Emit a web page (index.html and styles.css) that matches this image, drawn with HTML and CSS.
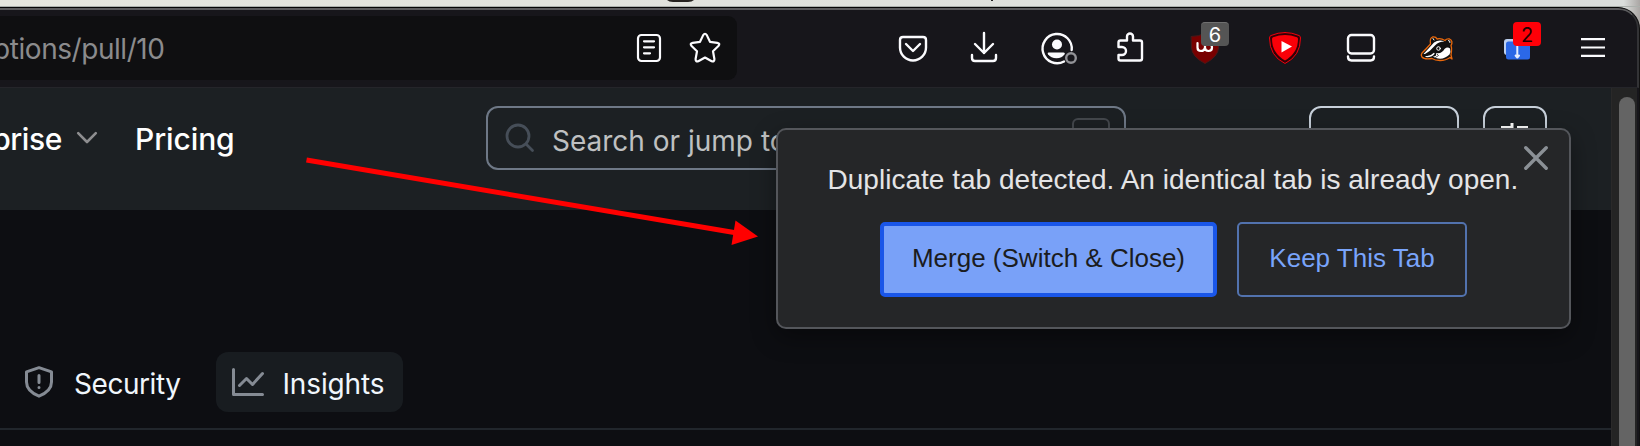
FILE: index.html
```html
<!DOCTYPE html>
<html lang="en">
<head>
<meta charset="utf-8">
<title>Duplicate tab</title>
<link rel="stylesheet" href="styles.css">
</head>
<body>
<div class="backdrop">
  <svg class="backdrop-marks" width="1640" height="6"><path d="M667 0h27q-2 2-6 2h-15q-4 0-6-2z" fill="#25221f"/><path d="M991 0h2v1h-2z" fill="#222"/></svg>
</div>
<div class="window">
  <div class="toolbar">
    <div class="urlbar">
      <div class="url"><span>options/pull/10</span></div>
      <svg class="reader" width="36" height="36" viewBox="0 0 36 36"><rect x="7" y="5" width="22" height="26" rx="3.5"/><path d="M13 11.3h10M13 17.3h10M13 23.3h6"/></svg>
      <svg class="star" width="36" height="36" viewBox="0 0 36 36"><path d="M16.2 5.1Q18 2.4 19.8 5.1L23 11.8L30.3 12.8Q33.6 13.4 31.4 16L26 21.2L27.4 29Q27.5 32 24.700 31.200L18 27.500L11.300 31.200Q8.500 32 8.600 29L10 21.200L4.600 16Q2.400 13.400 5.700 12.800L13 11.800Z"/></svg>
    </div>
    <div class="actions">
      <svg width="40" height="40" viewBox="0 0 40 40"><path d="M10 9h20q3 0 3 3v7.500a13 13 0 0 1-26 0V12q0-3 3-3z"/><path d="M13 16l7 7 7-7"/></svg>
      <svg width="40" height="40" viewBox="0 0 40 40"><path d="M20 5v20M11 16l9 9 9-9M8 27v3q0 3 3 3h18q3 0 3-3v-3"/></svg>
      <svg width="40" height="40" viewBox="0 0 40 40"><path d="M25 33.500A14.600 14.600 0 1 1 32.700 22"/><circle class="solid" cx="18" cy="16.500" r="5"/><path class="solid" d="M9.500 24.500h15q2 0 1 1.800-2.500 4-8 4t-8.500-4q-1-1.800.5-1.800z"/><circle class="account-dot" cx="32" cy="30" r="4.800"/></svg>
      <svg width="40" height="40" viewBox="0 0 40 40"><path d="M8.500 19v-4.500q0-2 2-2h6.500v-4a3 3 0 0 1 6 0v4h7q2 0 2 2v16q0 2-2 2h-19.500q-2 0-2-2V27h3.500a4 4 0 0 0 0-8z"/></svg>
      <div class="ext">
        <svg width="40" height="40" viewBox="0 0 40 40"><path d="M6.500 8.500q8 0 13.500-3.500 5.500 3.500 13.500 3.500v11q0 9-13.500 16Q6.500 28.500 6.500 19.500z" fill="#780000" stroke="#4c1717" stroke-width="1"/><path d="M12.500 15v4.500q0 3.500 3.500 3.500t4-3.500V17v2.500q0 3.500 3.500 3.500t3.500-3.500-3-3.500" stroke="#fff" stroke-width="2.200"/></svg>
        <span class="badge badge-grey">6</span>
      </div>
      <svg width="40" height="40" viewBox="0 0 40 40"><path d="M20 4.500q7 0 14 3 1.500.5 1.500 2.500 0 18-15.500 25.500Q4.500 28 4.500 10q0-2 1.500-2.500 7-3 14-3z" fill="#330006" stroke="#f1000d" stroke-width="1"/><path d="M20 7q6 0 12 2.300 1 .5 1 1.700 0 14-13 21.500Q7 25 7 11q0-1.200 1-1.700Q14 7 20 7z" fill="#fa0008" stroke="none"/><path d="M16.500 13l10.500 5.500-10.500 6z" fill="#fff" stroke="none"/></svg>
      <svg width="40" height="40" viewBox="0 0 40 40"><rect x="7" y="7" width="26" height="18.500" rx="3.500"/><path d="M7 28.500q0 4 3.500 4h19q3.500 0 3.500-4"/></svg>
      <svg width="40" height="40" viewBox="0 0 40 40"><path d="M5 25q5-5 8.500-9-1-6 2-7 3.500-.5 4.500 2 4-1 8 1.500 1.500-2 4.500-1.500 4 2 1.500 6.500 1 3 .5 5.500l-.500 4 1 4-2-1.500q-4 3-10 3-5 0-8-2-8 1-10-1.500-1.500-2 0-4z" fill="#111" stroke="#ea680c" stroke-width="1.300"/><path d="M6.500 26Q12 20 17 14.500q5-3.500 10.500-1-6 0-9.500 4-5 6-10 8.500z" fill="#fff" stroke="none"/><path d="M19 25q6 1 8.500-4 3-2.500 5.500-.5 1 3-.5 6-5 5-11.500 4-3-.5-5-2 4 0 3-3.500z" fill="#fff" stroke="none"/><path d="M9 28.500q5 .5 8-3" stroke="#fff" stroke-width="1.200"/><circle cx="21.500" cy="20.500" r="1.800" fill="#111" stroke="#fff" stroke-width="1"/><path d="M16 10.500l1 1.500M31.500 12.500q2 0 1.500 2" stroke="#fff" stroke-width="1"/><path d="M20 26l1.500 1.500-3 2" stroke="#555" stroke-width="1"/></svg>
      <div class="ext">
        <svg width="40" height="40" viewBox="0 0 40 40"><rect x="7" y="11" width="22" height="16" rx="3" fill="#bdd0f0" stroke="none"/><rect x="9" y="13.500" width="24" height="18" rx="2.500" fill="#2b68e7" stroke="none"/><path d="M20.300 18v10M18.600 27.500l1.700 2 1.700-2" stroke="#e6edff" stroke-width="2"/></svg>
        <span class="badge badge-red">2</span>
      </div>
      <svg width="40" height="40" viewBox="0 0 40 40"><path class="menu" d="M8 11.200h24M8 19.500h24M8 27.800h24"/></svg>
    </div>
  </div>

  <div class="viewport">
    <div class="page">
      <header class="site-header">
        <nav class="nav">
          <div class="nav-cut"><span>Enterprise</span></div>
          <svg class="chevron" width="22" height="14" viewBox="0 0 22 14"><path d="M2.200 2.200l8.800 8.800 8.800-8.800"/></svg>
          <span class="pricing">Pricing</span>
        </nav>
        <div class="search">
          <svg width="30" height="30" viewBox="0 0 30 30"><circle cx="13" cy="13" r="11"/><path d="M21 21l6.500 6.500"/></svg>
          <span class="placeholder">Search or jump to...</span>
          <span class="key"></span>
        </div>
        <div class="sign-up"></div>
        <div class="settings"><svg width="28" height="28" viewBox="0 0 28 28"><path d="M0 5.500h12M11 1v8M16 5.500h11"/></svg></div>
      </header>
      <div class="tabs">
        <div class="tab">
          <svg class="shield" width="28" height="32" viewBox="0 0 28 32"><path d="M14 1.700l12.500 4.200V16q0 9-12.500 14.200Q1.500 25 1.500 16V5.900z"/><path d="M14 9.500v7M14 21.400v.2"/></svg>
          <span class="security">Security</span>
        </div>
        <div class="tab tab-active">
          <svg class="chart" width="32" height="28" viewBox="0 0 32 28"><path d="M1.500 1.500v25h29M7.500 17.500l7-7 6 6L30.500 5.500"/></svg>
          <span class="insights">Insights</span>
        </div>
      </div>
    </div>
    <div class="scrollbar"><div class="thumb"></div></div>
  </div>
</div>

<div class="dialog">
  <p class="message">Duplicate tab detected. An identical tab is already open.</p>
  <div class="buttons">
    <button class="btn merge"><span>Merge (Switch &amp; Close)</span></button>
    <button class="btn keep"><span>Keep This Tab</span></button>
  </div>
  <svg class="close" width="24" height="24" viewBox="0 0 24 24"><path d="M1.800 1.800l20.400 20.400M22.200 1.800L1.800 22.200"/></svg>
</div>

<svg class="arrow" width="460" height="100" viewBox="0 0 460 100"><path d="M6.500 10L440 83.500" stroke="#f00" stroke-width="5" stroke-linecap="butt"/><path d="M435.500 70.500L458 86.500L431.500 95z" fill="#f00"/></svg>
</body>
</html>
```
FILE: styles.css
```css
* { box-sizing: border-box; }
body {
  margin: 0;
  width: 1640px;
  height: 446px;
  overflow: hidden;
  position: relative;
  background: linear-gradient(90deg, #e5e6de, #dadddb 99%, #aaa6a4);
  font-family: Inter, "Liberation Sans", sans-serif;
  white-space: nowrap;
}
svg { display: block; flex: none; fill: none; stroke-linecap: round; stroke-linejoin: round; }
.backdrop { height: 7px; overflow: hidden; border-bottom: 1px solid #abb0ac; }
.window {
  height: 445px;
  display: flex;
  flex-direction: column;
  border-top: 1px solid #050505;
  border-right: 1px solid #111;
  border-radius: 0 22px 0 0;
  overflow: hidden;
  background: #17161b;
}
.toolbar {
  height: 80px;
  flex: none;
  display: flex;
  align-items: flex-start;
  padding-top: 6px;
  border-top: 2px solid #5b5b5d;
  border-right: 2px solid #333336;
  border-bottom: 1px solid #25252a;
  border-radius: 0 20px 0 0;
}
.urlbar {
  width: 737px;
  height: 64px;
  display: flex;
  align-items: center;
  background: #0f0f11;
  border-radius: 0 9px 9px 0;
}
.url {
  width: 164.5px;
  display: flex;
  justify-content: flex-end;
  padding-top: 2px;
  font-size: 28px;
  letter-spacing: -.45px;
  color: #8b8b8d;
}
.reader, .star { stroke: #fbfbfe; stroke-width: 2.200; }
.reader { margin-left: 466.5px; }
.star { margin-left: 20px; }
.actions {
  margin-left: 156px;
  padding-top: 12px;
  display: grid;
  grid-template-columns: 71px 75px 71px 75px 80px 76px 76px 80px 76px 40px;
  stroke: #fbfbfe;
  stroke-width: 2.400;
}
.actions .solid { fill: #fbfbfe; stroke: none; }
.account-dot { stroke: #929297; fill: #17161b; }
.menu { stroke-width: 2.200; stroke-linecap: butt; }
.ext { position: relative; }
.badge {
  position: absolute;
  left: 16px;
  top: -6px;
  width: 28px;
  height: 24px;
  border-radius: 4px;
  font: 20px/26px Inter, sans-serif;
  text-align: center;
}
.badge-grey { background: #555; color: #fff; border-top: 1px solid #707070; line-height: 24px; }
.badge-red { background: #ff0008; color: #200; }
.viewport { flex: 1; display: flex; }
.page { width: 1611px; background: #0d0e12; }
.site-header { height: 122px; background: #1c2023; display: flex; align-items: flex-start; padding-top: 18px; }
.nav { width: 486px; height: 64px; display: flex; align-items: center; color: #fff; font-size: 30px; font-weight: 500; }
.nav span { padding-top: 2px; }
.nav-cut { width: 62px; display: flex; justify-content: flex-end; letter-spacing: -.4px; }
.chevron { margin-left: 14px; stroke: #8d8d8f; stroke-width: 2.600; }
.pricing { margin-left: 37px; letter-spacing: -.1px; }
.search {
  width: 640px;
  height: 64px;
  display: flex;
  align-items: center;
  border: 2px solid #6e7886;
  border-radius: 12px;
  padding: 0 14px 0 17px;
}
.search svg { stroke: #464e58; stroke-width: 2.800; }
.placeholder { margin-left: 17px; padding-top: 6px; font-size: 28px; color: #bfc0c1; }
.key { margin: 10px 0 0 auto; align-self: flex-start; width: 38px; height: 40px; border: 2px solid #44484d; border-radius: 6px; }
.sign-up { margin-left: 183px; width: 150px; height: 64px; border: 2px solid #c7d0da; border-radius: 12px; }
.settings { margin-left: 24px; width: 64px; height: 64px; border: 2px solid #c7d0da; border-radius: 12px; padding: 14px 16px; }
.settings svg { stroke: #fff; stroke-width: 3; stroke-linecap: butt; }
.tabs { height: 220px; padding: 142px 0 0 13px; display: flex; gap: 24px; border-bottom: 2px solid #21262c; }
.tab { height: 60px; width: 179px; display: flex; align-items: center; border-radius: 12px; color: #f0f6fc; font-size: 28px; padding-left: 12px; }
.tab-active { width: 187px; background: #181c20; padding-left: 16px; }
.tab svg { stroke: #858b94; stroke-width: 3; }
.security { margin-left: 21px; padding-top: 3px; letter-spacing: -.45px; }
.insights { margin-left: 18.5px; padding-top: 3px; letter-spacing: -.15px; }
.scrollbar { width: 26px; background: #242424; border-left: 1px solid #2a2929; padding: 9px 0 0 7px; }
.thumb { width: 16px; height: 360px; border-radius: 8px; background: #646464; }
.dialog {
  position: absolute;
  left: 776px;
  top: 128px;
  width: 795px;
  height: 201px;
  border: 2px solid #54565b;
  border-radius: 10px;
  background: #252628;
  box-shadow: 0 8px 24px rgba(0, 0, 0, .4);
  font-family: "Liberation Sans", sans-serif;
  padding-top: 33px;
}
.message { margin: 0; padding-left: 49.5px; font-size: 28px; line-height: 34px; letter-spacing: .02px; color: #e4e4e6; }
.buttons { display: flex; gap: 20px; margin: 25px 0 0 102px; }
.btn { height: 75px; padding: 0 0 2px; border-radius: 5px; font: 26px "Liberation Sans", sans-serif; }
.merge { width: 337px; background: #79a1f8; border: 4px solid #1a56e8; color: #1b1c20; }
.keep { width: 230px; background: transparent; border: 2px solid #5272ae; color: #79a4fb; }
.close { position: absolute; right: 21px; top: 16px; stroke: #8b9096; stroke-width: 3.400; }
.arrow { position: absolute; left: 300px; top: 150px; }
```
